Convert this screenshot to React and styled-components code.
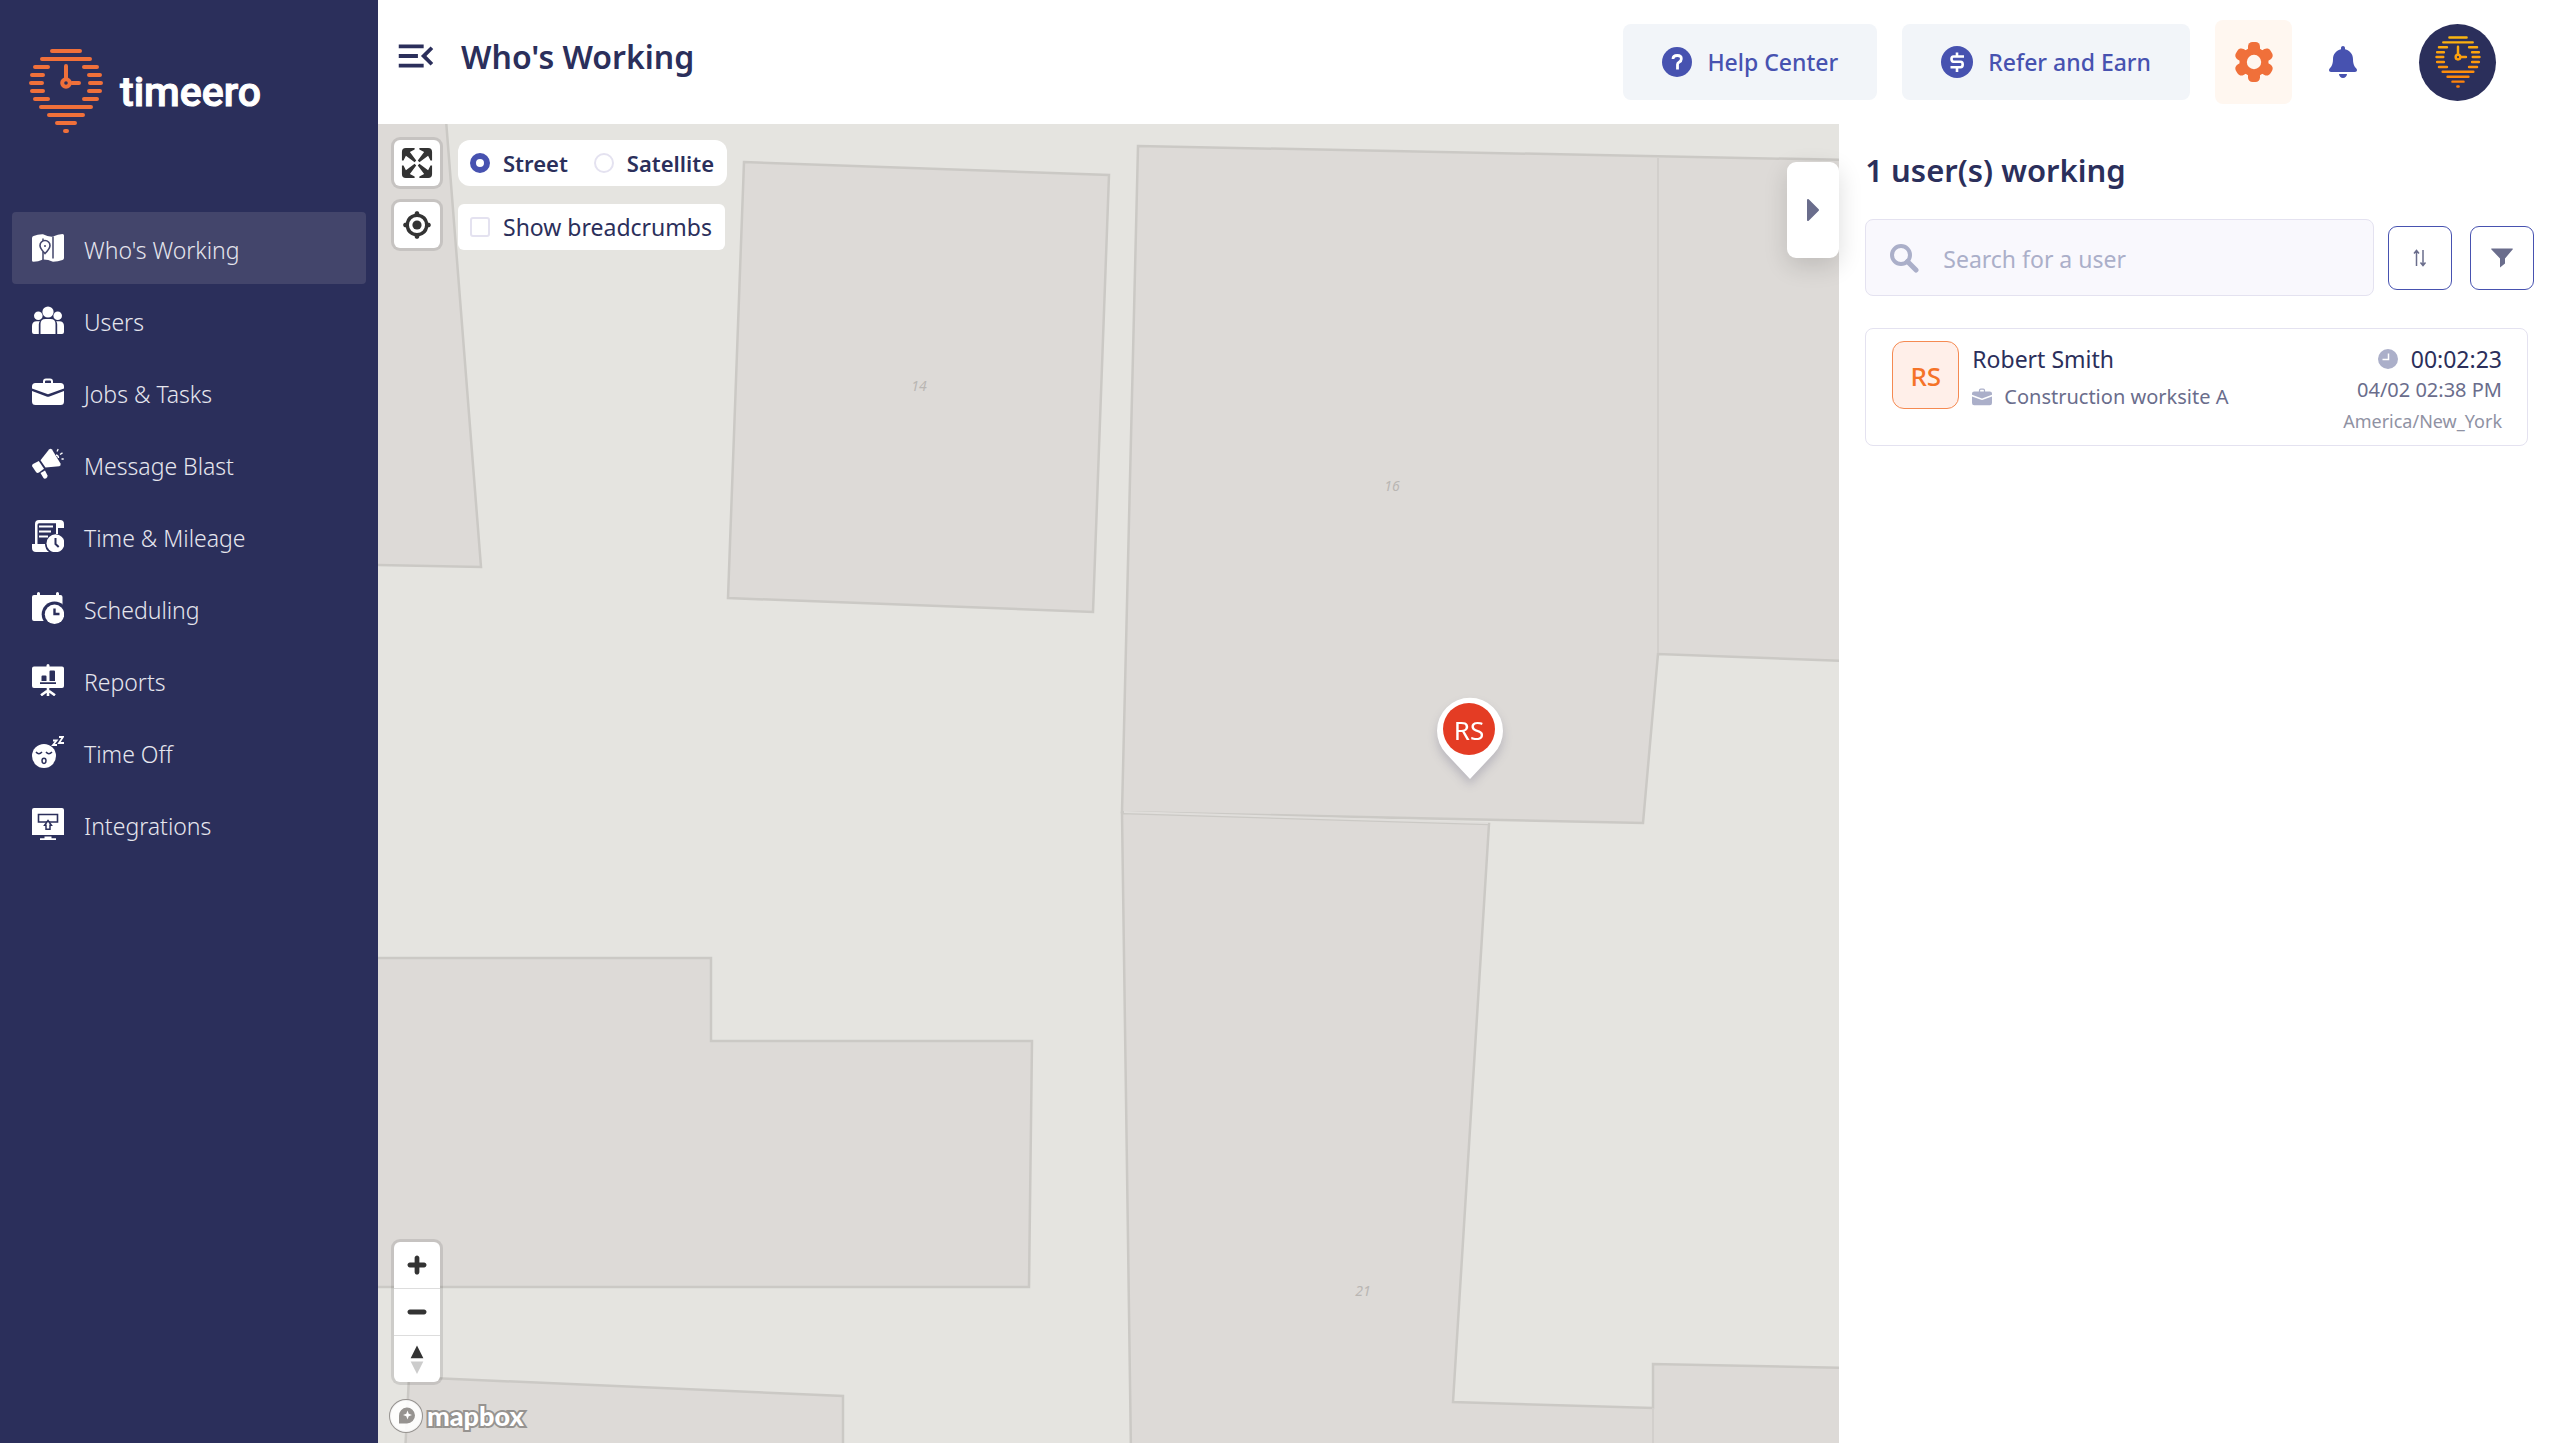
import React, { useState } from 'react'
import styled, { createGlobalStyle } from 'styled-components'
import { FaBell } from 'react-icons/fa'
import { MdMenuOpen } from 'react-icons/md'

const navy = '#2b2f5b'
const indigo = '#4752b0'
const orange = '#f0703a'
const slate = '#6a6d8c'
const muted = '#abafc9'

const GlobalStyle = createGlobalStyle`
  * {
    box-sizing: border-box;
  }
  body {
    margin: 0;
    background: white;
    color: ${navy};
    font-family: 'Noto Sans', 'Open Sans', sans-serif;
  }
  button, input {
    font-family: inherit;
    color: inherit;
  }
`

/* icons */

const PinLines = ({ color }) => (
  <g stroke={color} strokeWidth='4' strokeLinecap='round' fill='none'>
    <path d='M23 4h28M13 12h48' />
    <path d='M6 20h13M55 20h13M3 28h11M60 28h11M2 36h11M61 36h11M3 44h11M60 44h11M6 52h13M55 52h13' />
    <path d='M12 60h50M20 68h34M28 76h18M36 84h2' />
    <path d='M37 19v12M43 36h7' />
    <circle cx='37' cy='36' r='3.8' />
  </g>
)

const MapIcon = ({ cut }) => (
  <svg width='32' height='32' viewBox='0 0 32 32' fill='white'>
    <path d='M0 6Q0 4.600 1.500 4Q6 2 11 2.200Q16 5 21 4.600Q26 2 30.500 2Q32 2 32 3.500V26Q32 27.500 30.500 28Q26 29.800 21 29.800Q16 27.500 11 27.600Q6 29.800 1.500 29.800Q0 29.800 0 28.500z' />
    <path d='M11 6.500V9M11 20v8M21 4.500v22' stroke={cut} strokeWidth='1.500' />
    <path d='M13 21.500C10 18.500 8 16 8 13.500a5 5 0 0 1 10 0C18 16 16 18.500 13 21.500z' stroke={cut} strokeWidth='1.600' />
    <circle cx='13' cy='14' r='1' fill={cut} />
  </svg>
)

const UsersIcon = () => (
  <svg width='32' height='32' viewBox='0 0 32 32' fill='white'>
    <circle cx='16' cy='8' r='5.600' />
    <circle cx='6.300' cy='11.800' r='4.300' />
    <circle cx='25.700' cy='11.800' r='4.300' />
    <path d='M8.500 30V20q0-5 5-5h5q5 0 5 5v10z' />
    <path d='M7.800 17.200Q6.800 18.500 6.800 20.500V30H2q-2 0-2-2v-6q0-4.800 4.800-4.800zM24.200 17.200Q25.200 18.500 25.200 20.500V30H30q2 0 2-2v-6q0-4.800-4.800-4.800z' />
  </svg>
)

const BriefcaseIcon = ({ size = 32, color = 'white' }) => (
  <svg width={size} height={size} viewBox='0 0 32 32' fill={color}>
    <path d='M0 12.500V10.500Q0 7 3.500 7H11V5.500Q11 2.500 14 2.500h4q3 0 3 3V7h7.500Q32 7 32 10.500v2L16 18.200zM13 7h6V5.500q0-1-1-1h-4q-1 0-1 1z' />
    <path d='M0 15l14.500 5.500q1.500.5 3 0L32 15v10.500q0 3.500-3.500 3.500h-25Q0 29 0 25.500z' />
  </svg>
)

const MegaphoneIcon = () => (
  <svg width='32' height='32' viewBox='0 0 32 32' fill='white'>
    <path d='M8.500 12.200L17 1.500q1.500-1.500 3 0l8.500 14q.8 2-1.200 2.800L13.500 19.600z' />
    <path d='M6.800 13L12 20.800 7 24.600q-1.800 1-3-.6L.3 18.500Q-.4 17 1 16z' />
    <path d='M8.500 25l4.500-2.500L15.500 27.500q.3 1.800-1.200 2.800-2 1-3-.5z' />
    <path d='M25 3.500l1.200-2.400M28 6.500l2.500-1.600M29.500 11h2.200M24 7q2.500.5 2.500 3' stroke='white' strokeWidth='1.300' fill='none' />
  </svg>
)

const TimesheetIcon = ({ cut }) => (
  <svg width='32' height='32' viewBox='0 0 32 32' fill='white'>
    <path d='M3 24V4q0-4 4-4h21q4 0 4 4v4h-6v6H24V3.200H7Q5.500 3.200 5.500 5v19z' />
    <path d='M7 6.500h14M7 11.500h12M7 16.500h9' stroke='white' strokeWidth='2.200' />
    <path d='M0 24h13q0 5 4 8H4q-4 0-4-4z' />
    <circle cx='23.500' cy='23.300' r='9' />
    <path d='M23.500 18v6l3.200 3' stroke={cut} strokeWidth='2' fill='none' />
  </svg>
)

const CalendarIcon = ({ cut }) => (
  <svg width='32' height='32' viewBox='0 0 32 32' fill='white'>
    <path d='M0 5q0-2 2-2h3V1.500a1.500 1.500 0 0 1 3 0V3h16V1.500a1.500 1.500 0 0 1 3 0V3h1.500q2 0 2 2v24H2q-2 0-2-2z' />
    <circle cx='22.500' cy='22.300' r='12.800' fill={cut} />
    <circle cx='22.500' cy='22.300' r='9.700' />
    <path d='M22.500 16.500v5.500h5' stroke={cut} strokeWidth='2.400' fill='none' />
  </svg>
)

const ReportIcon = ({ cut }) => (
  <svg width='32' height='32' viewBox='0 0 32 32' fill='white'>
    <path d='M2 2.500h12.500V1.500a1.500 1.500 0 0 1 3 0v1H30q2 0 2 2V22q0 2-2 2H2q-2 0-2-2V4.500q0-2 2-2z' />
    <path d='M9.500 17v-4.500q0-1 1-1h3q1 0 1 1V17zM17.500 17V7.500q0-1 1-1h3.500q1 0 1 1V17zM8 18.200h16v1.800H8z' fill={cut} />
    <path d='M16 24v8M15 27l-6 4.300M17 27l6 4.300' stroke='white' strokeWidth='2.600' />
  </svg>
)

const SleepIcon = ({ cut }) => (
  <svg width='32' height='32' viewBox='0 0 32 32' fill='white'>
    <circle cx='12' cy='20' r='12' />
    <path d='M4 16q2.800 3.400 6 0M14 16q2.800 3.400 6 0' stroke={cut} strokeWidth='1.500' fill='none' />
    <ellipse cx='12' cy='24.800' rx='2' ry='2.600' stroke={cut} strokeWidth='1.500' />
    <path d='M21 4.500h3.600l-3.600 4.500h4M27 1h4l-4 6h5' stroke='white' strokeWidth='1.800' fill='none' />
  </svg>
)

const MonitorIcon = ({ cut }) => (
  <svg width='32' height='32' viewBox='0 0 32 32' fill='white'>
    <path d='M2 0h28q2 0 2 2v25H0V2q0-2 2-2zM8 30.200h4.500v-1.700h7v1.700H24V32H8z' />
    <path d='M6.500 6.500h19v7.500h-19z' stroke={cut} strokeWidth='1.600' fill='none' />
    <path d='M16 12.500l3.400 4.700H18v4h-4v-4h-1.400z' stroke={cut} strokeWidth='1.500' />
  </svg>
)

const HelpIcon = () => (
  <svg width='30' height='30' viewBox='0 0 30 30' fill='none'>
    <circle cx='15' cy='15' r='15' fill={indigo} />
    <path d='M11 12Q11 8.500 15.300 8.500T19.300 12Q19.300 14 17 15.200Q15.500 16 15.500 17.500V22.500' stroke='white' strokeWidth='2.800' />
  </svg>
)

const DollarIcon = () => (
  <svg width='32' height='32' viewBox='0 0 32 32' fill='none'>
    <circle cx='16' cy='16' r='16' fill={indigo} />
    <path d='M23 10.500H12.500Q10.500 10.500 10.500 13T12.500 15.800H19.500Q21.700 15.800 21.700 18.500T19.500 21.300H9.500M16 6.500v4M16 21.500v4.500' stroke='white' strokeWidth='2.600' />
  </svg>
)

const GearIcon = () => (
  <svg width='40' height='40' viewBox='0 0 40 40' fill={orange}>
    <circle cx='20' cy='20' r='14.500' />
    <rect x='14' width='12' height='40' rx='4.500' />
    <rect x='14' width='12' height='40' rx='4.500' transform='rotate(60 20 20)' />
    <rect x='14' width='12' height='40' rx='4.500' transform='rotate(120 20 20)' />
    <circle cx='20' cy='20' r='7.200' fill='#fff7f0' />
  </svg>
)

const SearchIcon = () => (
  <svg width='30' height='30' viewBox='0 0 30 30' fill='none' stroke={muted}>
    <circle cx='12' cy='12' r='9' strokeWidth='4' />
    <path d='M18.500 18.500l8.500 8.500' strokeWidth='5' strokeLinecap='round' />
  </svg>
)

const SortIcon = () => (
  <svg width='14' height='18' viewBox='0 0 14 18' fill='none' stroke={slate} strokeWidth='1.500'>
    <path d='M3.500 17V2M1 4.500L3.500 1.500 6 4.500M10 1v15M7.500 13.500l2.500 3 2.500-3' />
  </svg>
)

const FilterIcon = () => (
  <svg width='22' height='20' viewBox='0 0 22 20' fill={slate}>
    <path d='M0 1Q0 .5.800.5H21.200Q22 .5 22 1L14 10.500V15.500L9 19.500V10.500z' />
  </svg>
)

const ClockIcon = () => (
  <svg width='20' height='20' viewBox='0 0 20 20' fill='none'>
    <circle cx='10' cy='10' r='10' fill={muted} />
    <path d='M10.500 4.500v6H4.500' stroke='white' strokeWidth='1.500' />
  </svg>
)

const ControlIcon = ({ box = 29, children }) => (
  <svg width='46' height='46' viewBox={`0 0 ${box} ${box}`} fill='#333'>
    {children}
  </svg>
)

const Buildings = () => (
  <MapCanvas viewBox='0 0 1462 1319' preserveAspectRatio='xMinYMin slice'>
    <g fill='#dddad7' stroke='#cbc9c5' strokeWidth='2.500'>
      <path d='M-4-4H68L103 443L-4 441z' />
      <path d='M366 38L731 51L715 488L350 474z' />
      <path d='M760 22L1470 36V537L1280 530L1265 699L744 688z' />
      <path d='M-4 834H333V917H654L651 1163H-4z' />
      <path d='M31 1253L465 1272V1330H27z' />
      <path d='M744 689L1111 700L1075 1278L1275 1284V1240L1470 1244V1330H753z' />
    </g>
    <path d='M746 688L1110 699' stroke='#e0dedb' strokeWidth='2' />
    <path d='M1280 34V529M1275 1284V1330' stroke='#d2cfcc' strokeWidth='2' />
    <g fill='#b9b6b3' fontSize='14' fontStyle='italic' textAnchor='middle'>
      <text x='541' y='267'>14</text>
      <text x='1014' y='367'>16</text>
      <text x='985' y='1172'>21</text>
    </g>
  </MapCanvas>
)

const menu = [
  { label: "Who's Working", Icon: MapIcon },
  { label: 'Users', Icon: UsersIcon },
  { label: 'Jobs & Tasks', Icon: BriefcaseIcon },
  { label: 'Message Blast', Icon: MegaphoneIcon },
  { label: 'Time & Mileage', Icon: TimesheetIcon },
  { label: 'Scheduling', Icon: CalendarIcon },
  { label: 'Reports', Icon: ReportIcon },
  { label: 'Time Off', Icon: SleepIcon },
  { label: 'Integrations', Icon: MonitorIcon },
]

const App = () => {
  const [active, setActive] = useState("Who's Working")
  const [layer, setLayer] = useState('Street')
  const [breadcrumbs, setBreadcrumbs] = useState(false)
  const [query, setQuery] = useState('')

  return (
    <Page>
      <GlobalStyle />
      <Sidebar>
        <Brand href='#'>
          <svg width='74' height='88' viewBox='0 0 74 88'>
            <PinLines color={orange} />
          </svg>
          <BrandName>timeero</BrandName>
        </Brand>
        <nav>
          {menu.map(({ label, Icon }) => (
            <MenuItem
              key={label}
              href='#'
              $active={label === active}
              onClick={() => setActive(label)}
            >
              <Icon cut={label === active ? '#43456b' : navy} />
              <MenuLabel>{label}</MenuLabel>
            </MenuItem>
          ))}
        </nav>
      </Sidebar>
      <Main>
        <Header>
          <MenuToggle aria-label='Collapse menu'>
            <MdMenuOpen />
          </MenuToggle>
          <Title>Who's Working</Title>
          <Actions>
            <ActionButton>
              <HelpIcon />
              Help Center
            </ActionButton>
            <ActionButton>
              <DollarIcon />
              Refer and Earn
            </ActionButton>
            <SettingsButton aria-label='Settings'>
              <GearIcon />
            </SettingsButton>
            <BellButton aria-label='Notifications'>
              <FaBell />
            </BellButton>
            <AccountButton aria-label='Account'>
              <svg width='46' height='54' viewBox='0 0 74 88'>
                <defs>
                  <linearGradient id='gold' gradientUnits='userSpaceOnUse' x1='0' y1='0' x2='0' y2='88'>
                    <stop offset='0' stopColor='#fbb80f' />
                    <stop offset='1' stopColor='#ff7a0a' />
                  </linearGradient>
                </defs>
                <PinLines color='url(#gold)' />
              </svg>
            </AccountButton>
          </Actions>
        </Header>
        <Content>
          <MapArea>
            <Buildings />
            <TopControls>
              <ButtonColumn>
                <ControlGroup>
                  <ControlButton aria-label='Enter fullscreen'>
                    <ControlIcon>
                      <path d='M24 16v5.500c0 1.750-.75 2.500-2.500 2.500H16v-1l3-1.500-4-5.500 1-1 5.500 4 1.500-3h1zM6 16l1.500 3 5.500-4 1 1-4 5.500 3 1.500v1H7.500C5.750 24 5 23.250 5 21.500V16h1zm7-11v1l-3 1.500 4 5.500-1 1-5.500-4L6 13H5V7.500C5 5.750 5.750 5 7.500 5H13zm11 2.500c0-1.750-.75-2.500-2.500-2.500H16v1l3 1.500-4 5.500 1 1 5.500-4 1.500 3h1V7.500z' />
                    </ControlIcon>
                  </ControlButton>
                </ControlGroup>
                <ControlGroup>
                  <ControlButton aria-label='Find my location'>
                    <ControlIcon box={20}>
                      <path d='M10 4C9 4 9 5 9 5v.1A5 5 0 0 0 5.100 9H5s-1 0-1 1 1 1 1 1h.1A5 5 0 0 0 9 14.900v.1s0 1 1 1 1-1 1-1v-.1a5 5 0 0 0 3.900-3.900h.1s1 0 1-1-1-1-1-1h-.1A5 5 0 0 0 11 5.100V5s0-1-1-1zm0 2.500a3.500 3.500 0 1 1 0 7 3.500 3.500 0 1 1 0-7z' />
                      <circle cx='10' cy='10' r='2' />
                    </ControlIcon>
                  </ControlButton>
                </ControlGroup>
              </ButtonColumn>
              <OptionColumn>
                <OptionBox $round>
                  {['Street', 'Satellite'].map((name) => (
                    <Option key={name} $bold>
                      <Radio
                        type='radio'
                        name='layer'
                        checked={layer === name}
                        onChange={() => setLayer(name)}
                      />
                      {name}
                    </Option>
                  ))}
                </OptionBox>
                <OptionBox>
                  <Option>
                    <Checkbox
                      type='checkbox'
                      checked={breadcrumbs}
                      onChange={() => setBreadcrumbs(!breadcrumbs)}
                    />
                    Show breadcrumbs
                  </Option>
                </OptionBox>
              </OptionColumn>
            </TopControls>
            <BottomControls>
              <ControlGroup>
                <ControlButton aria-label='Zoom in'>
                  <ControlIcon>
                    <path d='M14.500 8.500c-.75 0-1.500.75-1.500 1.500v3h-3c-.75 0-1.500.75-1.500 1.500S9.250 16 10 16h3v3c0 .75.75 1.500 1.500 1.500S16 19.750 16 19v-3h3c.75 0 1.500-.75 1.500-1.500S19.750 13 19 13h-3v-3c0-.75-.75-1.500-1.500-1.500z' />
                  </ControlIcon>
                </ControlButton>
                <ControlButton aria-label='Zoom out'>
                  <ControlIcon>
                    <path d='M10 13c-.75 0-1.500.75-1.500 1.500S9.250 16 10 16h9c.75 0 1.500-.75 1.500-1.500S19.750 13 19 13h-9z' />
                  </ControlIcon>
                </ControlButton>
                <ControlButton aria-label='Reset bearing to north'>
                  <ControlIcon>
                    <path d='M10.500 14l4-8 4 8h-8z' />
                    <path d='M10.500 16l4 8 4-8h-8z' fill='#ccc' />
                  </ControlIcon>
                </ControlButton>
              </ControlGroup>
              <MapboxLink href='#'>
                <svg width='34' height='34' viewBox='0 0 34 34'>
                  <circle cx='17' cy='17' r='16' fill='white' fillOpacity='.9' stroke='#969390' strokeWidth='2' />
                  <path d='M10 24.500V17A8 8 0 1 1 18 24.500z' fill='#969390' />
                  <path d='M18.500 11.500l1.200 3.300 3.300 1.200-3.300 1.200-1.200 3.300-1.200-3.300-3.300-1.200 3.300-1.200z' fill='white' />
                </svg>
                mapbox
              </MapboxLink>
            </BottomControls>
            <Marker aria-label='Robert Smith'>
              <svg width='68' height='84' viewBox='0 0 68 84'>
                <path d='M34 82L10.500 57A33 33 0 1 1 57.500 57z' fill='white' />
                <circle cx='33' cy='32' r='26' fill='#e43c24' />
              </svg>
              <MarkerText>RS</MarkerText>
            </Marker>
            <PanelToggle aria-label='Hide user list'>
              <svg width='14' height='24' viewBox='0 0 14 24'>
                <path d='M2 2l10 10L2 22z' fill={slate} stroke={slate} strokeWidth='2' strokeLinejoin='round' />
              </svg>
            </PanelToggle>
          </MapArea>
          <Panel>
            <PanelTitle>1 user(s) working</PanelTitle>
            <Tools>
              <SearchBox>
                <SearchIcon />
                <SearchInput
                  aria-label='Search for a user'
                  placeholder='Search for a user'
                  value={query}
                  onChange={(e) => setQuery(e.target.value)}
                />
              </SearchBox>
              <ToolButtons>
                <ToolButton aria-label='Sort'>
                  <SortIcon />
                </ToolButton>
                <ToolButton aria-label='Filter'>
                  <FilterIcon />
                </ToolButton>
              </ToolButtons>
            </Tools>
            <UserCard>
              <Initials>RS</Initials>
              <UserInfo>
                <UserName>Robert Smith</UserName>
                <Job>
                  <BriefcaseIcon size={20} color={muted} />
                  Construction worksite A
                </Job>
              </UserInfo>
              <Shift>
                <Elapsed>
                  <ClockIcon />
                  00:02:23
                </Elapsed>
                <Started>04/02 02:38 PM</Started>
                <Zone>America/New_York</Zone>
              </Shift>
            </UserCard>
          </Panel>
        </Content>
      </Main>
    </Page>
  )
}

export default App

const Page = styled.div`
  display: flex;
  min-height: 100vh;
`
const Sidebar = styled.aside`
  flex: none;
  width: 378px;
  padding: 46px 12px;
  background: ${navy};
`
const Brand = styled.a`
  display: flex;
  align-items: center;
  gap: 17px;
  height: 90px;
  margin-bottom: 76px;
  padding-left: 17px;
  text-decoration: none;
`
const BrandName = styled.span`
  padding-top: 2px;
  font-family: Roboto, sans-serif;
  font-weight: 500;
  font-size: 41px;
  line-height: 48px;
  color: white;
  -webkit-text-stroke: 1px white;
`
const MenuItem = styled.a`
  display: flex;
  align-items: center;
  gap: 20px;
  height: 72px;
  padding: 0 20px;
  border-radius: 4px;
  text-decoration: none;
  color: #e6e6ee;
  background: ${(props) => (props.$active ? '#43456b' : 'transparent')};
`
const MenuLabel = styled.span`
  padding-top: 4px;
  font-size: 23px;
  font-weight: 300;
  line-height: 32px;
`
const Main = styled.main`
  flex: 1;
  min-width: 0;
  display: flex;
  flex-direction: column;
`
const Header = styled.header`
  display: flex;
  align-items: center;
  height: 124px;
  padding: 0 63px 0 15px;
`
const IconButton = styled.button`
  display: flex;
  align-items: center;
  justify-content: center;
  padding: 0;
  border: 0;
  background: none;
  cursor: pointer;
`
const MenuToggle = styled(IconButton)`
  font-size: 46px;
  color: ${navy};
  margin-bottom: 12px;
`
const Title = styled.h1`
  margin: 0 0 10px 22px;
  font-size: 32px;
  font-weight: 600;
  line-height: 40px;
`
const Actions = styled.div`
  display: flex;
  align-items: center;
  gap: 25px;
  margin-left: auto;
`
const ActionButton = styled(IconButton)`
  gap: 15px;
  height: 76px;
  padding: 0 39px;
  border-radius: 8px;
  background: #f2f5f9;
  color: ${indigo};
  font-size: 23px;
  font-weight: 500;
  line-height: 32px;
`
const SettingsButton = styled(IconButton)`
  width: 77px;
  height: 84px;
  border-radius: 8px;
  background: #fff7f0;
`
const BellButton = styled(IconButton)`
  width: 52px;
  height: 76px;
  font-size: 32px;
  color: ${indigo};
`
const AccountButton = styled(IconButton)`
  width: 77px;
  height: 77px;
  margin-left: 25px;
  border-radius: 50%;
  background: ${navy};
`
const Content = styled.div`
  flex: 1;
  display: flex;
`
const MapArea = styled.section`
  position: relative;
  flex: 1;
  display: flex;
  flex-direction: column;
  justify-content: space-between;
  padding: 16px 16px 10px;
  background: #e5e4e0;
`
/* the drawing lies under every control */
const MapCanvas = styled.svg`
  position: absolute;
  inset: 0;
  width: 100%;
  height: 100%;
`
const TopControls = styled.div`
  position: relative;
  display: flex;
  gap: 18px;
`
const ButtonColumn = styled.div`
  display: flex;
  flex-direction: column;
  gap: 16px;
`
const OptionColumn = styled.div`
  display: flex;
  flex-direction: column;
  align-items: flex-start;
  gap: 18px;
`
const ControlGroup = styled.div`
  width: 46px;
  border-radius: 6px;
  background: white;
  box-shadow: 0 0 0 3px rgba(0, 0, 0, 0.1);
`
const ControlButton = styled(IconButton)`
  width: 46px;
  height: 46px;
  & + & {
    height: 47px;
    border-top: 1px solid #ddd;
  }
`
const OptionBox = styled.div`
  display: flex;
  align-items: center;
  gap: 26px;
  height: 46px;
  padding: 0 13px 0 12px;
  border-radius: ${(props) => (props.$round ? '12px' : '6px')};
  background: white;
`
const Option = styled.label`
  display: flex;
  align-items: center;
  gap: 13px;
  font-size: ${(props) => (props.$bold ? '22px' : '23px')};
  font-weight: ${(props) => (props.$bold ? 600 : 400)};
  line-height: 32px;
`
const Tick = styled.input`
  appearance: none;
  width: 20px;
  height: 20px;
  margin: 0;
  border: 2px solid #e4e2f0;
  background: white;
`
const Radio = styled(Tick)`
  border-radius: 50%;
  &:checked {
    border: 6px solid ${indigo};
  }
`
const Checkbox = styled(Tick)`
  border-radius: 3px;
  &:checked {
    background: ${indigo};
  }
`
const BottomControls = styled.div`
  position: relative;
  display: flex;
  flex-direction: column;
  align-items: flex-start;
  gap: 17px;
`
const MapboxLink = styled.a`
  display: flex;
  align-items: center;
  gap: 4px;
  margin-left: -5px;
  font-family: Lato, sans-serif;
  font-size: 27px;
  font-weight: 900;
  line-height: 30px;
  color: white;
  text-decoration: none;
  -webkit-text-stroke: 4px #969390;
  paint-order: stroke fill;
`
const Marker = styled(IconButton)`
  position: absolute;
  left: 1058px;
  top: 573px;
  filter: drop-shadow(0 6px 5px rgba(43, 47, 91, 0.2));
`
const MarkerText = styled.span`
  position: absolute;
  inset: 0 2px auto 0;
  color: white;
  font-size: 26px;
  line-height: 66px;
`
const PanelToggle = styled(IconButton)`
  position: absolute;
  z-index: 1;
  top: 38px;
  right: 0;
  width: 52px;
  height: 96px;
  border-radius: 9px;
  background: white;
  box-shadow: 0 8px 24px rgba(0, 0, 0, 0.14);
`
const Panel = styled.section`
  width: 33%;
  padding: 24px 25px 24px 26px;
`
const PanelTitle = styled.h2`
  margin: 0 0 27px;
  font-size: 31px;
  font-weight: 600;
  line-height: 44px;
`
const Tools = styled.div`
  display: flex;
  align-items: center;
  gap: 14px;
`
const SearchBox = styled.div`
  flex: 1;
  display: flex;
  align-items: center;
  gap: 24px;
  height: 77px;
  padding: 0 23px;
  border: 1px solid #e4e2f0;
  border-radius: 8px;
  background: #f9f8fd;
`
const SearchInput = styled.input`
  flex: 1;
  min-width: 0;
  padding: 2px 0 0;
  border: 0;
  outline: 0;
  background: none;
  font-size: 23px;
  line-height: 32px;
  &::placeholder {
    color: ${muted};
    opacity: 1;
  }
`
const ToolButtons = styled.div`
  display: flex;
  gap: 18px;
`
const ToolButton = styled(IconButton)`
  width: 64px;
  height: 64px;
  border: 1px solid ${indigo};
  border-radius: 9px;
`
const UserCard = styled.article`
  display: flex;
  gap: 13px;
  height: 118px;
  margin: 32px 6px 0 0;
  padding: 12px 25px 12px 26px;
  border: 1px solid #e4e2f0;
  border-radius: 8px;
`
const Initials = styled.div`
  width: 67px;
  height: 68px;
  border: 1px solid #f58a52;
  border-radius: 12px;
  background: #ffefe9;
  color: #f57328;
  font-size: 26px;
  font-weight: 500;
  line-height: 68px;
  text-align: center;
`
const UserInfo = styled.div`
  flex: 1;
  padding-top: 2px;
`
const UserName = styled.div`
  font-size: 23px;
  line-height: 32px;
`
const Job = styled.div`
  display: flex;
  align-items: center;
  gap: 12px;
  margin-top: 6px;
  color: ${slate};
  font-size: 20px;
  line-height: 32px;
`
const Shift = styled.div`
  display: flex;
  flex-direction: column;
  align-items: flex-end;
  padding-top: 2px;
`
const Elapsed = styled.div`
  display: flex;
  align-items: center;
  gap: 13px;
  font-size: 23px;
  line-height: 32px;
`
const Started = styled.div`
  color: ${slate};
  font-size: 20px;
  line-height: 30px;
`
const Zone = styled.div`
  color: #9092a3;
  font-size: 18px;
  line-height: 32px;
`
